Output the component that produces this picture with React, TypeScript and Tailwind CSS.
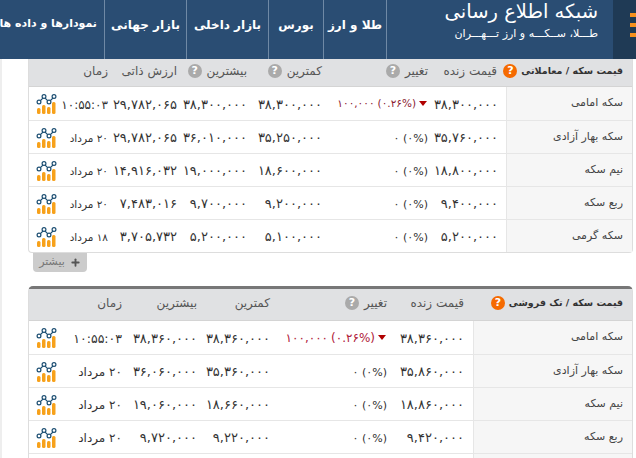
import React from 'react';
import { Plus } from 'lucide-react';

const font = "[font-family:'DejaVu_Sans',sans-serif]";

const nav = [
  { label: 'طلا و ارز', w: 'w-[63px] justify-center text-[12px]' },
  { label: 'بورس', w: 'w-[55px] justify-center text-[12px]' },
  { label: 'بازار داخلی', w: 'w-[82px] justify-center text-[12px]' },
  { label: 'بازار جهانی', w: 'w-[82px] justify-center text-[12px]' },
  { label: 'نمودارها و داده ها', w: 'w-[105px] pr-[7px] text-[11px]' },
];

const Help = ({ orange }: { orange?: boolean }) => (
  <span
    className={`inline-flex w-[14px] h-[14px] shrink-0 items-center justify-center rounded-full text-[11px] font-bold text-white ${
      orange ? 'bg-[#f56a00]' : 'bg-[#aaaaaa]'
    }`}
  >
    ?
  </span>
);

const ChartIcon = () => (
  <svg width="21" height="20" viewBox="0 0 21 20" className="block">
    <rect x="1" y="14" width="3.5" height="6" rx="1.5" fill="#f7a11a" />
    <rect x="6" y="11" width="3.5" height="9" rx="1.5" fill="#f7a11a" />
    <rect x="11" y="13" width="3.5" height="7" rx="1.5" fill="#f7a11a" />
    <rect x="16" y="8" width="3.5" height="12" rx="1.5" fill="#f7a11a" />
    <path d="M3 8 L8 3 L13 8 L18 3" fill="none" stroke="#1d4f73" strokeWidth="1.1" />
    <circle cx="3" cy="8" r="1.9" fill="#fff" stroke="#1d4f73" strokeWidth="1.2" />
    <circle cx="8" cy="2.5" r="1.9" fill="#fff" stroke="#1d4f73" strokeWidth="1.2" />
    <circle cx="13" cy="8" r="1.9" fill="#fff" stroke="#1d4f73" strokeWidth="1.2" />
    <circle cx="18" cy="2.5" r="1.9" fill="#fff" stroke="#1d4f73" strokeWidth="1.2" />
  </svg>
);

const Change = ({ value, live }: { value?: string; live?: boolean }) =>
  value ? (
    <span className={`flex items-center gap-[3px] whitespace-nowrap pr-[1px] ${live ? 'text-[12px] text-[#b0203a]' : 'text-[10.5px] text-[#8a1a30]'}`}>
      <span className="w-0 h-0 border-x-[4px] border-x-transparent border-t-[5px] border-t-[#b00000]" />
      <span>(۰.۲۶%)</span>
      <span>{value}</span>
    </span>
  ) : (
    <span className="whitespace-nowrap text-[11px] text-[#333333]">(۰%) ۰</span>
  );

type Row = { name: string; cells: string[]; change?: string };

const silver: Row[] = [
  { name: 'سکه امامی', change: '۱۰۰,۰۰۰', cells: ['۳۸,۳۰۰,۰۰۰', '۳۸,۳۰۰,۰۰۰', '۳۸,۳۰۰,۰۰۰', '۲۹,۷۸۲,۰۶۵', '۱۰:۵۵:۰۳'] },
  { name: 'سکه بهار آزادی', cells: ['۳۵,۷۶۰,۰۰۰', '۳۵,۲۵۰,۰۰۰', '۳۶,۰۱۰,۰۰۰', '۲۹,۷۸۲,۰۶۵', '۲۰ مرداد'] },
  { name: 'نیم سکه', cells: ['۱۸,۸۰۰,۰۰۰', '۱۸,۶۰۰,۰۰۰', '۱۹,۰۰۰,۰۰۰', '۱۴,۹۱۶,۰۳۲', '۲۰ مرداد'] },
  { name: 'ربع سکه', cells: ['۹,۴۰۰,۰۰۰', '۹,۲۰۰,۰۰۰', '۹,۷۰۰,۰۰۰', '۷,۴۸۳,۰۱۶', '۲۰ مرداد'] },
  { name: 'سکه گرمی', cells: ['۵,۲۰۰,۰۰۰', '۵,۱۰۰,۰۰۰', '۵,۲۰۰,۰۰۰', '۳,۷۰۵,۷۳۲', '۱۸ مرداد'] },
];

const retail: Row[] = [
  { name: 'سکه امامی', change: '۱۰۰,۰۰۰', cells: ['۳۸,۳۶۰,۰۰۰', '۳۸,۳۶۰,۰۰۰', '۳۸,۳۶۰,۰۰۰', '۱۰:۵۵:۰۳'] },
  { name: 'سکه بهار آزادی', cells: ['۳۵,۸۶۰,۰۰۰', '۳۵,۳۶۰,۰۰۰', '۳۶,۰۶۰,۰۰۰', '۲۰ مرداد'] },
  { name: 'نیم سکه', cells: ['۱۸,۸۶۰,۰۰۰', '۱۸,۶۶۰,۰۰۰', '۱۹,۰۶۰,۰۰۰', '۲۰ مرداد'] },
  { name: 'ربع سکه', cells: ['۹,۴۲۰,۰۰۰', '۹,۲۲۰,۰۰۰', '۹,۷۲۰,۰۰۰', '۲۰ مرداد'] },
];

const Num = ({ children }: { children: React.ReactNode }) => (
  <span className="whitespace-nowrap text-[13px] text-[#333333]">{children}</span>
);

const HeadCell = ({ label, help }: { label: string; help?: boolean }) => (
  <div className="flex items-center gap-[5px] whitespace-nowrap pb-[3px] text-[12px] text-[#555555]">
    <span>{label}</span>
    {help && <Help />}
  </div>
);

const HeadTitle = ({ label }: { label: string }) => (
  <div className="flex items-center gap-[4px] pb-[3px] pr-[9px] text-[9.5px] font-bold text-[#333333] whitespace-nowrap">
    <span>{label}</span>
    <Help orange />
  </div>
);

const App = () => {
  return (
    <div dir="rtl" className={`w-[636px] h-[458px] overflow-hidden bg-white ${font}`}>
      <header className="flex h-[59px] bg-[#2a4d73] overflow-hidden">
        <div className="relative w-[23px] shrink-0 bg-[#1f3a55]">
          <div className="absolute left-[17px] top-[13px] flex flex-col gap-[6px]">
            <span className="block w-[6px] h-[4px] bg-[#f7901e]" />
            <span className="block w-[6px] h-[4px] bg-[#f7901e]" />
            <span className="block w-[6px] h-[4px] bg-[#f7901e]" />
          </div>
        </div>
        <div className="w-[226px] shrink-0 pr-[15px] text-white">
          <div className="text-[19.5px] leading-[24px] whitespace-nowrap">شبکه اطلاع رسانی</div>
          <div className="text-[11px] leading-[18px] mt-[1px] whitespace-nowrap">طـــلا، ســکـــه و ارز تـــهـــران</div>
        </div>
        {nav.map((item) => (
          <div
            key={item.label}
            className={`${item.w} shrink-0 flex items-center border-r border-[#6f89a5] pb-[10px] font-bold text-white whitespace-nowrap`}
          >
            {item.label}
          </div>
        ))}
      </header>

      <div className="h-[399px] border-l-2 border-[#eeeeee] pl-[26px] pr-[3px]">
        <section className="border-x border-b border-[#dddddd] rounded-b-[4px]">
          <div className="grid grid-cols-[126px_78px_106px_75px_70px_69px_48px_31px] h-[28px] items-center bg-[#e0e1e3] border-b border-[#d4d4d4]">
            <HeadTitle label="قیمت سکه / معاملاتی" />
            <div className="pr-[9px]"><HeadCell label="قیمت زنده" /></div>
            <div><HeadCell label="تغییر" help /></div>
            <div><HeadCell label="کمترین" help /></div>
            <div><HeadCell label="بیشترین" help /></div>
            <div><HeadCell label="ارزش ذاتی" /></div>
            <div><HeadCell label="زمان" /></div>
            <div />
          </div>
          {silver.map((row, i) => (
            <div
              key={row.name}
              className={`grid grid-cols-[126px_78px_106px_75px_70px_69px_48px_31px] h-[33px] items-center ${i > 0 ? 'border-t border-[#e6e6e6]' : ''}`}
            >
              <div className="h-full flex items-center pr-[9px] bg-[#f6f6f6] border-l border-[#e6e6e6] text-[11px] text-[#444444] whitespace-nowrap">
                {row.name}
              </div>
              <div className="pr-[8px]"><Num>{row.cells[0]}</Num></div>
              <div><Change value={row.change} /></div>
              <div><Num>{row.cells[1]}</Num></div>
              <div><Num>{row.cells[2]}</Num></div>
              <div><Num>{row.cells[3]}</Num></div>
              <div><span className={`whitespace-nowrap text-[#333333] ${i === 0 ? 'text-[12px]' : 'text-[10.5px]'}`}>{row.cells[4]}</span></div>
              <div className="flex justify-center pl-[3px] pt-[1px]"><ChartIcon /></div>
            </div>
          ))}
        </section>
        <div className="flex justify-end pl-[5px] mb-[14px]">
          <div className="flex items-center justify-center gap-[5px] w-[54px] h-[19px] rounded-b-[4px] bg-[#cccccc] text-[11px] text-[#777777]">
            <Plus size={11} strokeWidth={4} className="text-[#555555]" />
            <span>بیشتر</span>
          </div>
        </div>

        <section className="border-x border-t-[3px] border-[#dddddd] border-t-[#777777] rounded-t-[5px]">
          <div className="grid grid-cols-[159px_86px_117px_73px_75px_62px_31px] h-[32px] items-center bg-[#e0e1e3] border-b border-[#d4d4d4]">
            <HeadTitle label="قیمت سکه / تک فروشی" />
            <div className="pr-[9px]"><HeadCell label="قیمت زنده" /></div>
            <div><HeadCell label="تغییر" help /></div>
            <div><HeadCell label="کمترین" /></div>
            <div><HeadCell label="بیشترین" /></div>
            <div><HeadCell label="زمان" /></div>
            <div />
          </div>
          {retail.map((row, i) => (
            <div
              key={row.name}
              className={`grid grid-cols-[159px_86px_117px_73px_75px_62px_31px] h-[33px] items-center ${i > 0 ? 'border-t border-[#e6e6e6]' : ''}`}
            >
              <div className="h-full flex items-center pr-[9px] bg-[#f6f6f6] border-l border-[#e6e6e6] text-[11px] text-[#444444] whitespace-nowrap">
                {row.name}
              </div>
              <div className="pr-[9px]"><Num>{row.cells[0]}</Num></div>
              <div><Change value={row.change} live /></div>
              <div><Num>{row.cells[1]}</Num></div>
              <div><Num>{row.cells[2]}</Num></div>
              <div><span className={`whitespace-nowrap text-[#333333] ${i === 0 ? 'text-[12.5px]' : 'text-[12px]'}`}>{row.cells[3]}</span></div>
              <div className="flex justify-center pl-[3px] pt-[1px]"><ChartIcon /></div>
            </div>
          ))}
          <div className="h-[33px] border-t border-[#e6e6e6]">
            <div className="h-full w-[159px] bg-[#f6f6f6] border-l border-[#e6e6e6]" />
          </div>
        </section>
      </div>
    </div>
  );
};

export default App;
